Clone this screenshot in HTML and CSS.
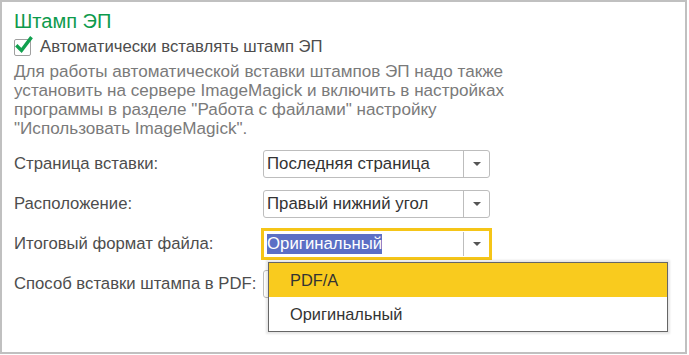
FILE: index.html
```html
<!DOCTYPE html>
<html lang="ru">
<head>
    <meta charset="UTF-8">
    <title>Штамп ЭП</title>
    <link rel="stylesheet" href="styles.css">
</head>
<body>
    <div class="panel">
        <h2 class="title">Штамп ЭП</h2>

        <label class="check-row">
            <span class="checkbox">
                <svg width="20" height="20" viewBox="0 0 20 20">
                    <path d="M3.5 10.5 L7.5 14.5 L16.5 2.5" fill="none" stroke="#11a14f" stroke-width="3.4" stroke-linecap="square"/>
                </svg>
            </span>
            Автоматически вставлять штамп ЭП
        </label>

        <p class="note">
            Для работы автоматической вставки штампов ЭП надо также<br>
            установить на сервере ImageMagick и включить в настройках<br>
            программы в разделе "Работа с файлами" настройку<br>
            "Использовать ImageMagick".
        </p>

        <div class="form-grid">
            <div class="label">Страница вставки:</div>
            <div class="field">
                <span class="value">Последняя страница</span>
                <span class="drop"><i class="arrow"></i></span>
            </div>

            <div class="label">Расположение:</div>
            <div class="field">
                <span class="value">Правый нижний угол</span>
                <span class="drop"><i class="arrow"></i></span>
            </div>

            <div class="label">Итоговый формат файла:</div>
            <div class="field focused">
                <span class="value"><span class="selected">Оригинальный</span></span>
                <span class="drop"><i class="arrow"></i></span>
            </div>

            <div class="label">Способ вставки штампа в PDF:</div>
            <div class="field">
                <span class="value"></span>
                <span class="drop"><i class="arrow"></i></span>
            </div>
        </div>

        <ul class="dropdown">
            <li class="active">PDF/A</li>
            <li>Оригинальный</li>
        </ul>
    </div>
</body>
</html>
```

FILE: styles.css
```css
* {
    box-sizing: border-box;
    margin: 0;
    padding: 0;
}

body {
    font-family: "Liberation Sans", Arial, sans-serif;
    background: #ffffff;
}

.panel {
    position: relative;
    width: 687px;
    height: 354px;
    border: 2px solid #c0c0c0;
    padding: 7px 12px;
    color: #4d4d4d;
}

.title {
    font-size: 20px;
    line-height: 24px;
    font-weight: normal;
    color: #0d9a4c;
}

.check-row {
    display: flex;
    align-items: center;
    gap: 9px;
    margin-top: 4px;
    font-size: 16.7px;
    line-height: 20px;
    color: #4d4d4d;
}

.checkbox {
    position: relative;
    width: 17px;
    height: 17px;
    border: 1px solid #a0a0a0;
    border-radius: 2px;
    background: #fff;
}

.checkbox svg {
    position: absolute;
    left: -1px;
    top: -4px;
}

.note {
    margin-top: 5px;
    font-size: 17.1px;
    line-height: 19px;
    color: #7a7a7a;
}

.form-grid {
    display: grid;
    grid-template-columns: 249px 227px;
    grid-auto-rows: 28px;
    row-gap: 12px;
    margin-top: 12px;
    align-items: center;
}

.label {
    font-size: 16.7px;
    color: #4d4d4d;
}

.field {
    display: flex;
    height: 28px;
    border: 1px solid #bdbdbd;
    border-radius: 3px;
    background: #fff;
}

.field .value {
    flex: 1;
    display: flex;
    align-items: center;
    padding-left: 3px;
    font-size: 16.8px;
    color: #333;
    white-space: nowrap;
}

.field .drop {
    width: 26px;
    border-left: 1px solid #bdbdbd;
    display: flex;
    align-items: center;
    justify-content: center;
}

.arrow {
    width: 0;
    height: 0;
    border-left: 4px solid transparent;
    border-right: 4px solid transparent;
    border-top: 4px solid #555;
}

.field.focused {
    border-color: #f5c518;
    border-radius: 0;
    outline: 2px solid #f5c518;
}

.field.focused .drop {
    margin: 1px 0;
}

.selected {
    background: #5b6fc5;
    color: #fff;
    line-height: 20px;
}

.dropdown {
    position: absolute;
    left: 266px;
    top: 260px;
    width: 400px;
    list-style: none;
    border: 1px solid #666;
    background: #fff;
    box-shadow: 0 0 2px 2px rgba(0, 0, 0, 0.1);
}

.dropdown li {
    height: 34px;
    line-height: 34px;
    padding-left: 21px;
    font-size: 16.4px;
    color: #333;
}

.dropdown li.active {
    background: #f9cb1e;
}
```
